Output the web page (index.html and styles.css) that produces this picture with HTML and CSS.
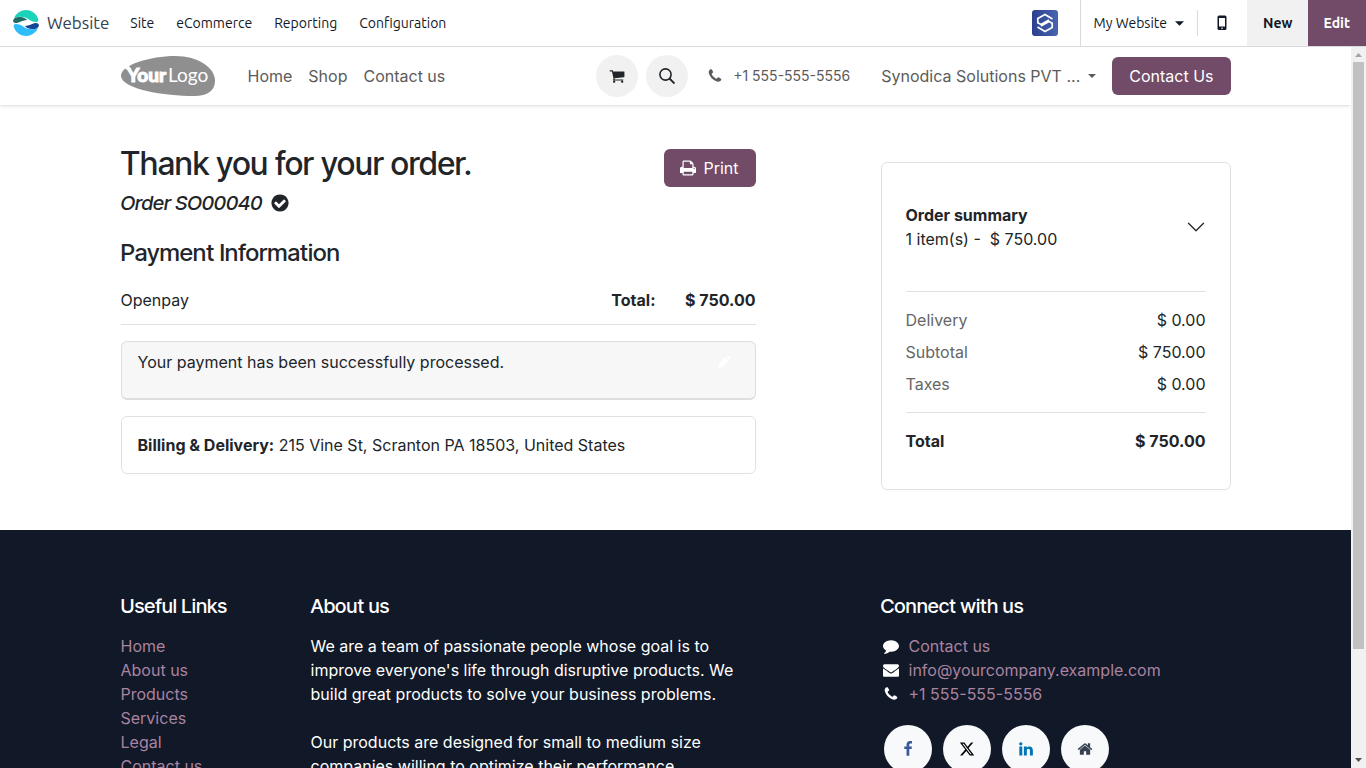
FILE: index.html
```html
<!DOCTYPE html>
<html lang="en">
<head>
<meta charset="utf-8">
<meta name="viewport" content="width=device-width, initial-scale=1">
<title>Order confirmation</title>
<link rel="stylesheet" href="styles.css">
</head>
<body>
<svg class="sprite" aria-hidden="true">
  <symbol id="i-caret" viewBox="0 0 10 5"><path d="M0 0h10L5 5z"/></symbol>
  <symbol id="i-phone" viewBox="0 0 1792 1792"><path d="M1600 1240q0 27-10 70.500t-21 68.500q-21 50-122 106-94 51-186 51-27 0-53-3.500t-57.500-12.500-47-14.500-55.500-20.500-49-18q-98-35-175-83-127-79-264-216t-216-264q-48-77-83-175-3-9-18-49t-20.500-55.500-14.500-47-12.500-57.500-3.500-53q0-92 51-186 56-101 106-122 25-11 68.500-21t70.500-10q14 0 21 3 18 6 53 76 11 19 30 54t35 63.500 31 53.500q3 4 17.500 25t21.500 35.500 7 28.500q0 20-28.500 50t-62 55-62 53-28.500 46q0 9 5 22.500t8.500 20.500 14 24 11.500 19q76 137 174 235t235 174q2 1 19 11.500t24 14 20.500 8.500 22.500 5q18 0 46-28.500t53-62 55-62 50-28.500q14 0 28.500 7t35.500 21.500 25 17.500q25 15 53.500 31t63.500 35 54 30q70 35 76 53 3 7 3 21z"/></symbol>
</svg>

<header class="topbar">
  <a class="topbar-brand" href="#">
    <svg width="26" height="26" viewBox="0 0 26 26" aria-hidden="true">
      <path d="M1 8.500C3 3 8 0 13 0s10 3 12 8.500c1 2.500 0 3.500-2 3.500-5 0-7-3-11-4.500C7 6 3 7 1 8.500z" fill="#1ad3bb"/>
      <path d="M0 10.500C1 7.500 4 6.500 8 7c3 .5 5 1.500 6 3-4 0-7 2.500-10 3C2 13.200 0 12.500 0 10.500z" fill="#1f6b64"/>
      <path d="M25 17.500c-2 5.500-7 8.500-12 8.500S3 23 1 17.500c-1-2.500 0-3.500 2-3.500 5 0 7 3 11 4.500 5 1.500 9 .5 11-1z" fill="#2ebcfa"/>
      <path d="M26 15.500c-1 3-4 4-8 3.500-3-.5-5-1.500-6-3 4 0 7-2.500 10-3 2-.2 4 .5 4 2.500z" fill="#144496"/>
    </svg>
    Website
  </a>
  <nav class="topbar-menu" aria-label="Application">
    <a href="#">Site</a>
    <a href="#">eCommerce</a>
    <a href="#">Reporting</a>
    <a href="#">Configuration</a>
  </nav>
  <div class="topbar-tools">
    <a class="company-mark" href="#" aria-label="Company">
      <svg width="26" height="26" viewBox="0 0 26 26" aria-hidden="true">
        <defs><linearGradient id="mark" x1="0" x2="1"><stop stop-color="#2b3f8d"/><stop offset="1" stop-color="#4866b0"/></linearGradient></defs>
        <rect width="26" height="26" rx="3" fill="url(#mark)"/>
        <path d="M20.500 9L13 4.500 5.800 8.500v4.200L9 14.500l8-4.500M5.500 17l7.500 4.500 7.200-4v-4.200L17 11.500 9 16" fill="none" stroke="#fff" stroke-width="1.700"/>
      </svg>
    </a>
    <button class="site-switch" type="button">My Website <svg width="9" height="5" aria-hidden="true"><use href="#i-caret"/></svg></button>
    <button class="mobile-preview" type="button" aria-label="Mobile preview">
      <svg width="10" height="16" viewBox="0 0 10 16" aria-hidden="true"><path fill-rule="evenodd" d="M2 .5h6A1.500 1.500 0 0 1 9.500 2v11.500A1.500 1.500 0 0 1 8 15H2A1.500 1.500 0 0 1 .5 13.500V2A1.500 1.500 0 0 1 2 .5zM2 3v8.500h6V3zM5 12.500a.8.8 0 1 0 0 1.600.8.8 0 0 0 0-1.600z"/></svg>
    </button>
    <button class="action-new" type="button">New</button>
    <button class="action-edit" type="button">Edit</button>
  </div>
</header>

<div class="frame">
  <div class="page">
    <header class="site-header">
      <div class="container site-nav">
        <a class="site-logo" href="#" aria-label="Your Logo">
          <svg width="94" height="40" viewBox="0 0 94 40">
            <path d="M0 19C1 9 29 0 54 0c24 0 40 12 40 25 0 9-7 15-21 15C43 40-1 33 0 19z" fill="#8f8f8f"/>
            <path d="M3 11l5-1 2 3-4 1z" fill="#fff"/>
            <text class="logo-bold" x="6" y="26">Your</text>
            <text class="logo-light" x="47" y="26">Logo</text>
          </svg>
        </a>
        <nav class="site-links" aria-label="Main">
          <a href="#">Home</a>
          <a href="#">Shop</a>
          <a href="#">Contact us</a>
        </nav>
        <div class="site-actions">
          <div class="round-actions">
            <a class="round" href="#" aria-label="Cart">
              <svg width="16" height="16" viewBox="0 0 1792 1792" aria-hidden="true"><path d="M704 1536q0 52-38 90t-90 38-90-38-38-90 38-90 90-38 90 38 38 90zm896 0q0 52-38 90t-90 38-90-38-38-90 38-90 90-38 90 38 38 90zm128-1088v512q0 24-16.500 42.500t-40.500 21.500l-1044 122q13 60 13 70 0 16-24 64h920q26 0 45 19t19 45-19 45-45 19h-1024q-26 0-45-19t-19-45q0-11 8-31.500t16-36 21.500-40 15.500-29.500l-177-823h-204q-26 0-45-19t-19-45 19-45 45-19h256q16 0 28.500 6.500t19.500 15.500 13 24.500 8 26 5.500 29.500 4.500 26h1201q26 0 45 19t19 45z"/></svg>
            </a>
            <button class="round" type="button" aria-label="Search">
              <svg width="16" height="16" viewBox="0 0 16 16" aria-hidden="true"><circle cx="6.500" cy="6.500" r="5.600" fill="none" stroke="currentColor" stroke-width="1.600"/><path d="M10.500 10.500l5 5" stroke="currentColor" stroke-width="1.900"/></svg>
            </button>
          </div>
          <a class="header-phone" href="#"><svg width="16" height="16" aria-hidden="true"><use href="#i-phone"/></svg>+1 555-555-5556</a>
          <button class="account" type="button">Synodica Solutions PVT ... <svg width="8" height="4" aria-hidden="true"><use href="#i-caret"/></svg></button>
          <a class="btn" href="#">Contact Us</a>
        </div>
      </div>
    </header>

    <main class="container columns order">
      <section class="confirmation">
        <div class="heading">
          <div>
            <h1>Thank you for your order.</h1>
            <p class="order-ref"><em>Order SO00040</em>
              <svg width="20" height="20" viewBox="0 0 1792 1792" aria-hidden="true"><path d="M1412 734q0-28-18-46l-91-90q-19-19-45-19t-45 19l-408 407-226-226q-19-19-45-19t-45 19l-91 90q-18 18-18 46 0 27 18 45l362 362q19 19 45 19 27 0 46-19l543-543q18-18 18-45zm252 162q0 209-103 385.500t-279.500 279.500-385.500 103-385.500-103-279.500-279.500-103-385.500 103-385.500 279.500-279.500 385.500-103 385.500 103 279.500 279.500 103 385.500z"/></svg>
            </p>
          </div>
          <button class="btn print" type="button">
            <svg width="16" height="16" viewBox="64 64 1664 1664" aria-hidden="true"><path d="M448 1536h896v-256h-896v256zm0-640h896v-384h-160q-40 0-68-28t-28-68v-160h-640v640zm1152 64q0-26-19-45t-45-19-45 19-19 45 19 45 45 19 45-19 19-45zm128 0v416q0 13-9.500 22.500t-22.500 9.500h-224v160q0 40-28 68t-68 28h-960q-40 0-68-28t-28-68v-160h-224q-13 0-22.500-9.500t-9.500-22.500v-416q0-79 56.500-135.500t135.500-56.500h64v-544q0-40 28-68t68-28h672q40 0 88 20t76 48l152 152q28 28 48 76t20 88v256h64q79 0 135.500 56.500t56.500 135.500z"/></svg>
            Print
          </button>
        </div>
        <h2>Payment Information</h2>
        <table class="payment">
          <tbody><tr><td>Openpay</td><th scope="row">Total:</th><td class="amount">$ 750.00</td></tr></tbody>
        </table>
        <div class="notice">
          <p>Your payment has been successfully processed.</p>
          <a class="notice-edit" href="#" aria-label="Edit message"><svg width="14" height="14" viewBox="0 0 12 12" aria-hidden="true"><path d="M1 11l.5-3.400L7 2l3 3-5.600 5.500zM7.800 1.300l.6-.5q.9-.7 1.700 0l1 1q.7.800 0 1.700l-.5.600z"/></svg></a>
        </div>
        <p class="address"><strong>Billing &amp; Delivery:</strong> 215 Vine St, Scranton PA 18503, United States</p>
      </section>

      <aside class="summary">
        <div class="summary-head">
          <div>
            <strong>Order summary</strong>
            <p>1 item(s) -&nbsp; $ 750.00</p>
          </div>
          <button type="button" aria-label="Toggle order summary">
            <svg width="20" height="20" viewBox="0 0 16 16" aria-hidden="true"><path d="M2 5l6 6 6-6" fill="none" stroke="currentColor" stroke-linecap="round" stroke-linejoin="round"/></svg>
          </button>
        </div>
        <table class="totals">
          <tbody>
            <tr><th scope="row">Delivery</th><td>$ 0.00</td></tr>
            <tr><th scope="row">Subtotal</th><td>$ 750.00</td></tr>
            <tr><th scope="row">Taxes</th><td>$ 0.00</td></tr>
          </tbody>
        </table>
        <table class="totals grand">
          <tbody><tr><th scope="row">Total</th><td>$ 750.00</td></tr></tbody>
        </table>
      </aside>
    </main>

    <footer class="site-footer">
      <div class="container columns">
        <section class="useful">
          <h3>Useful Links</h3>
          <ul>
            <li><a href="#">Home</a></li>
            <li><a href="#">About us</a></li>
            <li><a href="#">Products</a></li>
            <li><a href="#">Services</a></li>
            <li><a href="#">Legal</a></li>
            <li><a href="#">Contact us</a></li>
          </ul>
        </section>
        <section class="about">
          <h3>About us</h3>
          <p>We are a team of passionate people whose goal is to improve everyone's life through disruptive products. We build great products to solve your business problems.</p>
          <p>Our products are designed for small to medium size companies willing to optimize their performance.</p>
        </section>
        <section class="connect">
          <h3>Connect with us</h3>
          <ul>
            <li><svg width="16" height="16" viewBox="0 0 1792 1792" aria-hidden="true"><path d="M1792 896q0 174-120 321.500t-326 233-450 85.500q-70 0-145-8-198 175-460 242-49 14-114 22-17 2-30.500-9t-17.500-29v-1q-3-4-.5-12t2-10 4.500-9.500l6-9 7-8.500 8-9q7-8 31-34.500t34.500-38 31-39.500 32.500-51 27-59 26-76q-157-89-247.500-220t-90.500-281q0-130 71-248.500t191-204.500 286-136.500 348-50.500q244 0 450 85.500t326 233 120 321.500z"/></svg><a href="#">Contact us</a></li>
            <li><svg width="16" height="16" viewBox="0 0 1792 1792" aria-hidden="true"><path d="M1792 710v794q0 66-47 113t-113 47h-1472q-66 0-113-47t-47-113v-794q44 49 101 87 362 246 497 345 57 42 92.500 65.500t94.500 48 110 24.500h2q51 0 110-24.500t94.500-48 92.500-65.500q170-123 498-345 57-39 100-87zm0-294q0 79-49 151t-122 123q-376 261-468 325-10 7-42.500 31t-54 38.500-52 32.500-57.500 27-50 9h-2q-23 0-50-9t-57.500-27-52-32.500-54-38.500-42.500-31q-91-64-262-182.500t-205-142.500q-62-42-117-115.500t-55-136.500q0-78 41.500-130t118.500-52h1472q65 0 112.500 47t47.500 113z"/></svg><a href="#">info@yourcompany.example.com</a></li>
            <li><svg width="16" height="16" aria-hidden="true"><use href="#i-phone"/></svg><a href="#">+1 555-555-5556</a></li>
          </ul>
          <div class="social">
            <a class="facebook" href="#" aria-label="Facebook"><svg width="16" height="16" viewBox="0 0 1792 1792" aria-hidden="true"><path d="M1343 12v264h-157q-86 0-116 36t-30 108v189h293l-39 296h-254v759h-306v-759h-255v-296h255v-218q0-186 104-288.500t277-102.500q147 0 228 12z"/></svg></a>
            <a class="x" href="#" aria-label="X"><svg width="16" height="16" viewBox="0 0 24 24" aria-hidden="true"><path d="M18.244 2.250h3.308l-7.227 8.260 8.502 11.240H16.170l-5.214-6.817L4.990 21.750H1.680l7.730-8.835L1.254 2.250H8.080l4.713 6.231zm-1.161 17.520h1.833L7.084 4.126H5.117z"/></svg></a>
            <a class="linkedin" href="#" aria-label="LinkedIn"><svg width="16" height="16" viewBox="0 0 1792 1792" aria-hidden="true"><path d="M477 625v991h-330v-991h330zm21-306q1 73-50.500 122t-135.500 49h-2q-82 0-132-49t-50-122q0-74 51.500-122.500t134.500-48.500 133 48.500 51 122.500zm1166 729v568h-329v-530q0-105-40.500-164.500t-126.500-59.500q-63 0-105.500 34.500t-63.500 85.500q-11 30-11 81v553h-329q2-399 2-647t-1-296l-1-48h329v144h-2q20-32 41-56t56.500-52 87-43.500 114.500-15.500q171 0 275 113.500t104 332.500z"/></svg></a>
            <a class="home" href="#" aria-label="Home"><svg width="16" height="16" viewBox="0 0 1792 1792" aria-hidden="true"><path d="M1472 992v480q0 26-19 45t-45 19h-384v-384h-256v384h-384q-26 0-45-19t-19-45v-480q0-1 .5-3t.5-3l575-474 575 474q1 2 1 6zm223-69l-62 74q-8 9-21 11h-3q-13 0-21-7l-692-577-692 577q-12 8-24 7-13-2-21-11l-62-74q-8-10-7-23.500t11-21.500l719-599q32-26 76-26t76 26l244 204v-195q0-14 9-23t23-9h192q14 0 23 9t9 23v408l219 182q10 8 11 21.500t-7 23.500z"/></svg></a>
          </div>
        </section>
      </div>
    </footer>
  </div>

  <div class="scrollbar" aria-hidden="true">
    <svg width="7" height="4" viewBox="0 0 7 4"><path d="M0 4l3.500-4L7 4z" fill="#a3a3a3"/></svg>
    <div class="track"><div class="thumb"></div></div>
    <svg width="7" height="4" viewBox="0 0 7 4"><path d="M0 0h7L3.500 4z" fill="#505050"/></svg>
  </div>
</div>
</body>
</html>
```

FILE: styles.css
```css
* { box-sizing: border-box; }

body {
  margin: 0;
  height: 100vh;
  display: flex;
  flex-direction: column;
  overflow: hidden;
  background: #fff;
  color: #212529;
  font: 16px/24px Inter, sans-serif;
}

h1, h2, h3, p, ul { margin: 0; }
ul { padding: 0; list-style: none; }
a { color: inherit; text-decoration: none; }
button { border: 0; padding: 0; background: none; color: inherit; font: inherit; cursor: pointer; }
svg { flex: none; fill: currentColor; }
table { width: 100%; border-collapse: collapse; }
th, td { padding: 0; text-align: left; }
.sprite { position: absolute; width: 0; height: 0; }

/* Application bar */
.topbar {
  flex: none;
  display: flex;
  height: 47px;
  border-bottom: 1px solid #d8dadd;
  color: #111827;
  font: 14px/20px Ubuntu, "Noto Sans", sans-serif;
}
.topbar-brand {
  display: flex;
  align-items: center;
  gap: 8px;
  padding: 0 10px 0 13px;
  color: #374151;
  font-size: 17px;
}
.topbar-menu { display: flex; align-items: center; }
.topbar-menu a { padding: 0 11px; }
.topbar-tools { display: flex; align-items: stretch; margin-left: auto; }
.company-mark { display: flex; align-items: center; padding: 0 22px; border-right: 1px solid #d8dadd; }
.site-switch { display: flex; align-items: center; gap: 8px; padding: 0 13px; }
.mobile-preview {
  display: flex;
  align-items: center;
  align-self: center;
  height: 26px;
  padding: 0 20px 0 19px;
  border-left: 1px solid #d8dadd;
}
.action-new, .action-edit { padding: 0 16px; font-weight: 600; }
.action-new { padding-right: 15px; background: #f1f1f1; }
.action-edit { background: #714b67; color: #fff; }

/* Scrolling frame */
.frame { flex: 1; min-height: 0; display: flex; }
.page { flex: 1; min-width: 0; overflow: auto; scrollbar-width: none; }
.scrollbar {
  flex: none;
  width: 15px;
  display: flex;
  flex-direction: column;
  align-items: center;
  gap: 5px;
  padding: 6px 0;
  background: #f1f1f1;
}
.track { flex: 1; width: 11px; }
.thumb { height: 85%; background: #c1c1c1; }

.container { width: 100%; max-width: 1140px; margin: 0 auto; padding: 0 15px; }
.columns { display: grid; grid-template-columns: repeat(12, 1fr); column-gap: 30px; align-items: start; }

/* Site header */
.site-header { padding: 9px 0; box-shadow: 0 1px 3px rgba(0, 0, 0, .15); color: #5b5b5b; }
.site-nav { display: flex; align-items: center; height: 40px; }
.site-logo svg { display: block; }
.logo-bold, .logo-light { fill: #fff; font-family: Lato, sans-serif; font-size: 19px; }
.logo-bold { font-weight: 900; stroke: #fff; stroke-width: 1px; }
.logo-light { font-weight: 400; }
.site-links { display: flex; gap: 16px; margin-left: 33px; }
.site-actions { display: flex; align-items: center; margin-left: auto; }
.round-actions { display: flex; gap: 8px; }
.round {
  display: flex;
  align-items: center;
  justify-content: center;
  width: 42px;
  height: 42px;
  border-radius: 50%;
  background: #f1f1f1;
  color: #212529;
}
.header-phone { display: flex; align-items: center; gap: 10px; margin: 0 31px 0 19px; font-size: 14px; }
.account { display: flex; align-items: center; gap: 8px; margin-right: 16px; }
.btn {
  display: flex;
  align-items: center;
  gap: 8px;
  height: 38px;
  padding: 0 17px;
  border-radius: 6px;
  background: #714b67;
  color: #fff;
}

/* Confirmation */
.order { padding-top: 39px; padding-bottom: 40px; }
.confirmation { grid-column: span 7; }
.heading { display: flex; align-items: flex-start; justify-content: space-between; margin-bottom: 24px; }
h1, h2, h3 { font-family: "Inter Tight", Inter, sans-serif; font-weight: 500; }
h1 { margin-bottom: 8px; font-size: 32px; line-height: 39px; }
.order-ref { display: flex; align-items: center; gap: 8px; font: 500 20px/24px "Inter Tight", Inter, sans-serif; }
h2 { margin-bottom: 9px; font-size: 24px; line-height: 28px; }
.print { margin-top: 5px; padding: 0 17px 0 16px; gap: 7px; }
.payment { border-bottom: 1px solid #dee2e6; }
.payment td, .payment th { padding: 12px 0; }
.payment th { text-align: right; }
.payment .amount { width: 100px; text-align: right; font-weight: 700; }
.notice {
  display: flex;
  justify-content: space-between;
  margin: 16px 0;
  padding: 8px 24px 24px 16px;
  border: 1px solid #dedede;
  border-bottom-width: 2px;
  border-radius: 6px;
  background: #f7f7f7;
}
.notice-edit { display: flex; align-items: center; color: #fff; }
.address { padding: 16px; border: 1px solid #dee2e6; border-radius: 6px; }

/* Order summary */
.summary { grid-column: 9 / span 4; margin-top: 18px; padding: 0 24px; border: 1px solid #dee2e6; border-radius: 6px; }
.summary-head { display: flex; align-items: center; justify-content: space-between; padding: 40px 0; }
.summary-head button, .summary-head button svg { display: block; }
.totals { border-top: 1px solid #dee2e6; border-collapse: separate; border-spacing: 0; padding: 12px 0; }
.totals th { padding: 4px 0; color: #666; font-weight: 400; }
.totals td { padding: 4px 0; text-align: right; }
.grand { padding-bottom: 32px; }
.grand th { color: inherit; }
.grand th, .grand td { font-weight: 700; }

/* Site footer */
.site-footer { padding: 64px 0; background: #111827; color: #fff; }
.site-footer h3 { margin-bottom: 16px; font-size: 20px; line-height: 24px; }
.site-footer li a { color: #a983a0; }
.useful { grid-column: span 2; }
.about { grid-column: span 5; }
.about p + p { margin-top: 24px; }
.connect { grid-column: 9 / span 4; }
.connect li { display: flex; align-items: center; gap: 10px; padding-left: 2px; }
.social { display: flex; gap: 11px; margin: 19px 0 0 3px; }
.social a {
  display: flex;
  align-items: center;
  justify-content: center;
  width: 48px;
  height: 48px;
  border-radius: 50%;
  background: #f8f9fa;
  color: #374151;
}
.social .facebook { color: #3b5998; }
.social .x { color: #000; }
.social .linkedin { color: #0077b5; }
```
